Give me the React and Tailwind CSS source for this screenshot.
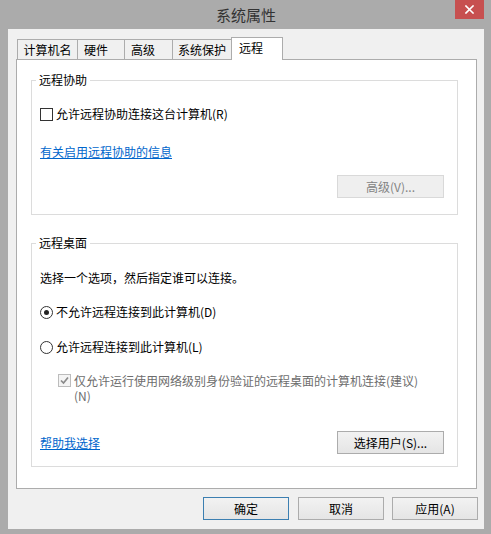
export default function App() {
  return (
    <div className="w-[491px] h-[534px] bg-[#ababab] flex flex-col font-['Noto_Sans_CJK_SC','Microsoft_YaHei',sans-serif] text-[12px] text-black">
      {/* Title bar */}
      <div className="h-[29px] shrink-0 relative flex items-center justify-center text-[15px] text-[#333]">
        <span className="ml-[1px] leading-none">系统属性</span>
        <div className="absolute right-[7px] top-0 w-[29px] h-[19px] bg-[#c75050] flex items-center justify-center">
          <svg width="9" height="9" viewBox="0 0 9 9">
            <path d="M1 1 L8 8 M8 1 L1 8" stroke="#fff" strokeWidth="1.6" strokeLinecap="square" />
          </svg>
        </div>
      </div>

      {/* Body */}
      <div className="ml-[8px] w-[476px] h-[500px] shrink-0 bg-[#f0f0f0] flex flex-col pt-[8px]">
        {/* Tabs */}
        <div className="flex items-end h-[23px] ml-[9px] relative z-10">
          <div className="w-[61px] h-[20px] mb-px border border-b-0 border-[#acacac] bg-[#f0f0f0] flex items-center justify-center leading-none">计算机名</div>
          <div className="w-[48px] h-[20px] mb-px -ml-px border border-b-0 border-[#acacac] bg-[#f0f0f0] flex items-center pl-[6px] leading-none">硬件</div>
          <div className="w-[49px] h-[20px] mb-px -ml-px border border-b-0 border-[#acacac] bg-[#f0f0f0] flex items-center pl-[6px] leading-none">高级</div>
          <div className="w-[62px] h-[20px] mb-px -ml-px border border-b-0 border-[#acacac] bg-[#f0f0f0] flex items-center pl-[5px] leading-none">系统保护</div>
          <div className="w-[52px] h-[23px] -ml-[3px] border border-b-0 border-[#acacac] bg-white flex items-center pl-[7px] pb-[2px] leading-none relative z-10">远程</div>
        </div>

        {/* Panel */}
        <div className="ml-[8px] w-[461px] h-[430px] -mt-px bg-white border border-[#acacac] flex flex-col">
          {/* Remote assistance group */}
          <div className="mt-[20px] ml-[14px] w-[427px] h-[135px] border border-[#dcdcdc] flex flex-col">
            <div className="-mt-[9px] ml-[4px] px-[3px] bg-white self-start leading-[16px]">远程协助</div>
            <div className="mt-[18px] ml-[8px] flex items-center gap-[3px] leading-[16px]">
              <div className="w-[13px] h-[13px] border border-[#333] bg-white"></div>
              <span>允许远程协助连接这台计算机(R)</span>
            </div>
            <div className="mt-[22px] ml-[8px] self-start text-[#0066cc] underline leading-[16px]">有关启用远程协助的信息</div>
            <div className="mt-[15px] self-end mr-[13px] w-[107px] h-[23px] bg-[#efefef] border border-[#d9d9d9] text-[#838383] flex items-center justify-center leading-none">高级(V)...</div>
          </div>

          {/* Remote desktop group */}
          <div className="mt-[28px] ml-[14px] w-[427px] h-[224px] border border-[#dcdcdc] flex flex-col">
            <div className="-mt-[9px] ml-[4px] px-[3px] bg-white self-start leading-[16px]">远程桌面</div>
            <div className="mt-[19px] ml-[8px] leading-[16px]">选择一个选项，然后指定谁可以连接。</div>
            <div className="mt-[18px] ml-[8px] flex items-center gap-[3px] leading-[16px]">
              <div className="w-[13px] h-[13px] rounded-full border border-[#333] bg-white flex items-center justify-center">
                <div className="w-[5px] h-[5px] rounded-full bg-[#222]"></div>
              </div>
              <span>不允许远程连接到此计算机(D)</span>
            </div>
            <div className="mt-[19px] ml-[8px] flex items-center gap-[3px] leading-[16px]">
              <div className="w-[13px] h-[13px] rounded-full border border-[#333] bg-white"></div>
              <span>允许远程连接到此计算机(L)</span>
            </div>
            <div className="mt-[18px] ml-[26px] flex items-start gap-[3px] leading-[15px] text-[#6d6d6d]">
              <div className="mt-[1px] w-[13px] h-[13px] shrink-0 border border-[#bcbcbc] bg-[#f4f4f4] flex items-center justify-center">
                <svg width="11" height="11" viewBox="0 0 11 11">
                  <path d="M2 5.5 L4.5 8 L9 2.5" fill="none" stroke="#8a8a8a" strokeWidth="1.7" />
                </svg>
              </div>
              <span>仅允许运行使用网络级别身份验证的远程桌面的计算机连接(建议)<br />(N)</span>
            </div>
            <div className="mt-[28px] flex items-center justify-between">
              <span className="ml-[8px] text-[#0066cc] underline leading-[16px]">帮助我选择</span>
              <div className="mr-[13px] w-[107px] h-[23px] bg-gradient-to-b from-[#f2f2f2] to-[#e5e5e5] border border-[#acacac] flex items-center justify-center leading-none">选择用户(S)...</div>
            </div>
          </div>
        </div>

        {/* Bottom buttons */}
        <div className="mt-[8px] flex justify-end pr-[6px]">
          <div className="w-[86px] h-[23px] mr-[9px] bg-gradient-to-b from-[#f2f2f2] to-[#e5e5e5] border border-[#3c7fb1] flex items-center justify-center leading-none">确定</div>
          <div className="w-[86px] h-[23px] mr-[8px] bg-gradient-to-b from-[#f2f2f2] to-[#e5e5e5] border border-[#acacac] flex items-center justify-center leading-none">取消</div>
          <div className="w-[86px] h-[23px] bg-gradient-to-b from-[#f2f2f2] to-[#e5e5e5] border border-[#acacac] flex items-center justify-center leading-none">应用(A)</div>
        </div>
      </div>
    </div>
  );
}
